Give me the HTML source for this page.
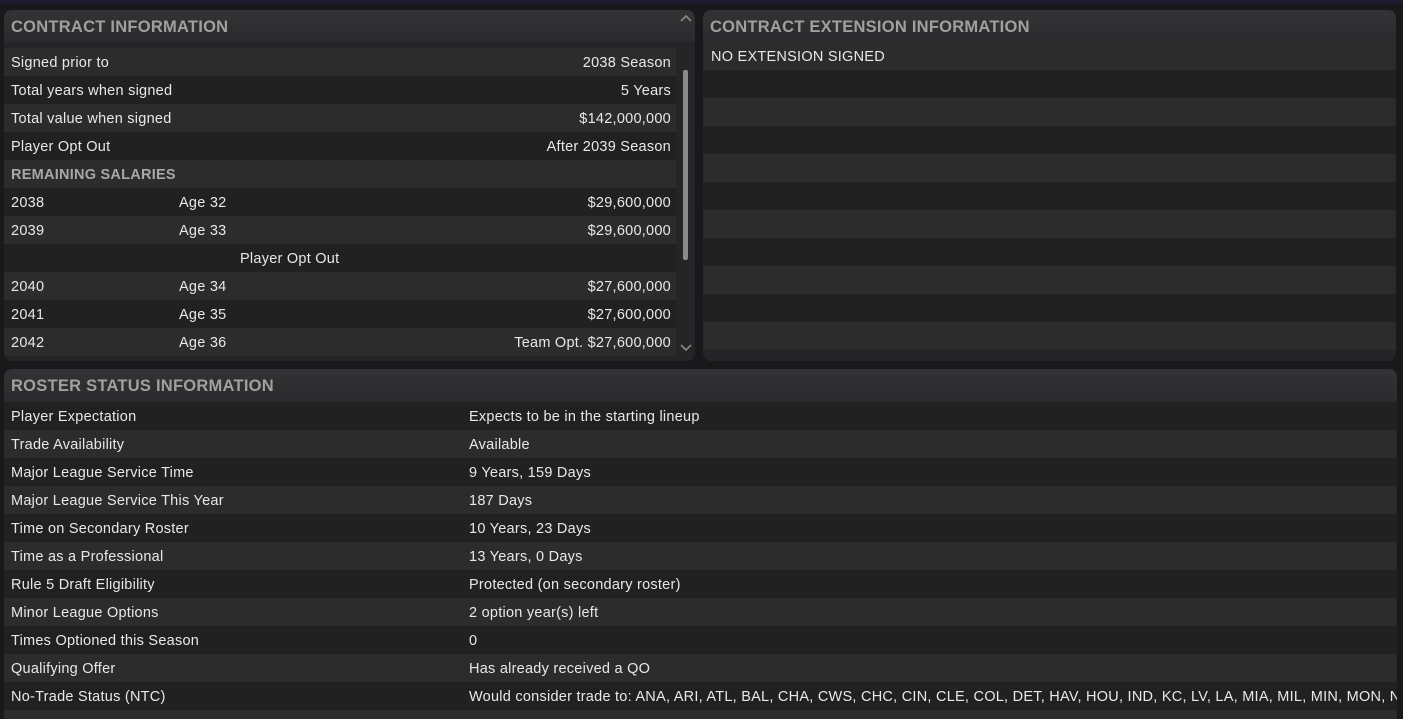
<!DOCTYPE html><html><head><style>
*{margin:0;padding:0;box-sizing:border-box}
html,body{width:1403px;height:719px;overflow:hidden}
body{background:#19191b;font-family:"Liberation Sans",sans-serif;font-size:14.5px;letter-spacing:.25px;color:#e8e8e8;position:relative}
.top{position:absolute;left:0;top:0;width:1403px;height:4px;background:#1c1c2e}
.panel{position:absolute;background:#252527;border-radius:8px;overflow:hidden}
.hd{height:32px;line-height:34px;padding-left:7px;font-weight:bold;font-size:16.5px;color:#a0a0a0;background:linear-gradient(#333335,#2b2b2d);}
.row{height:28px;line-height:30px;padding-left:7px;position:relative;white-space:nowrap}
.a{background:#2c2c2c}.b{background:#212121}
.r{position:absolute;right:5px;top:0}
.g{color:#a8a8a8;font-weight:bold}
</style></head><body>
<div class="top"></div>
<div class="panel" style="left:4px;top:10px;width:691px;height:351px">
<div class="hd">CONTRACT INFORMATION</div>
<div style="position:absolute;left:0;top:38px;width:672px">
<div class="row a">Signed prior to<span class="r">2038 Season</span></div>
<div class="row b">Total years when signed<span class="r">5 Years</span></div>
<div class="row a">Total value when signed<span class="r">$142,000,000</span></div>
<div class="row b">Player Opt Out<span class="r">After 2039 Season</span></div>
<div class="row a g">REMAINING SALARIES</div>
<div class="row b">2038<span style="position:absolute;left:175px">Age 32</span><span class="r">$29,600,000</span></div>
<div class="row a">2039<span style="position:absolute;left:175px">Age 33</span><span class="r">$29,600,000</span></div>
<div class="row b"><span style="position:absolute;left:236px">Player Opt Out</span></div>
<div class="row a">2040<span style="position:absolute;left:175px">Age 34</span><span class="r">$27,600,000</span></div>
<div class="row b">2041<span style="position:absolute;left:175px">Age 35</span><span class="r">$27,600,000</span></div>
<div class="row a">2042<span style="position:absolute;left:175px">Age 36</span><span class="r">Team Opt. $27,600,000</span></div>
</div>
<div style="position:absolute;left:679px;top:60px;width:5px;height:190px;background:#8a8a8a;border-radius:2px"></div>
<svg style="position:absolute;left:675px;top:3px" width="14" height="10"><path d="M2 8 L7 3 L12 8" stroke="#888" stroke-width="1.6" fill="none"/></svg>
<svg style="position:absolute;left:675px;top:333px" width="14" height="10"><path d="M2 2 L7 7 L12 2" stroke="#888" stroke-width="1.6" fill="none"/></svg>
</div>
<div class="panel" style="left:703px;top:10px;width:693px;height:351px">
<div class="hd">CONTRACT EXTENSION INFORMATION</div>
<div style="position:absolute;left:0;top:32px;width:693px">
<div class="row a" style="padding-left:8px">NO EXTENSION SIGNED</div>
<div class="row b"></div><div class="row a"></div><div class="row b"></div><div class="row a"></div><div class="row b"></div><div class="row a"></div><div class="row b"></div><div class="row a"></div><div class="row b"></div><div class="row a"></div>
</div></div>
<div class="panel" style="left:4px;top:369px;width:1393px;height:360px;border-radius:8px 8px 0 0">
<div class="hd" style="height:33px;line-height:35px">ROSTER STATUS INFORMATION</div>
<div style="position:absolute;left:0;top:33px;width:1393px">
<div class="row b">Player Expectation<span style="position:absolute;left:465px">Expects to be in the starting lineup</span></div>
<div class="row a">Trade Availability<span style="position:absolute;left:465px">Available</span></div>
<div class="row b">Major League Service Time<span style="position:absolute;left:465px">9 Years, 159 Days</span></div>
<div class="row a">Major League Service This Year<span style="position:absolute;left:465px">187 Days</span></div>
<div class="row b">Time on Secondary Roster<span style="position:absolute;left:465px">10 Years, 23 Days</span></div>
<div class="row a">Time as a Professional<span style="position:absolute;left:465px">13 Years, 0 Days</span></div>
<div class="row b">Rule 5 Draft Eligibility<span style="position:absolute;left:465px">Protected (on secondary roster)</span></div>
<div class="row a">Minor League Options<span style="position:absolute;left:465px">2 option year(s) left</span></div>
<div class="row b">Times Optioned this Season<span style="position:absolute;left:465px">0</span></div>
<div class="row a">Qualifying Offer<span style="position:absolute;left:465px">Has already received a QO</span></div>
<div class="row b" style="overflow:hidden">No-Trade Status (NTC)<span style="position:absolute;left:465px">Would consider trade to: ANA, ARI, ATL, BAL, CHA, CWS, CHC, CIN, CLE, COL, DET, HAV, HOU, IND, KC, LV, LA, MIA, MIL, MIN, MON, NYY, NYM</span></div>
<div class="row a"></div>
</div></div>
</body></html>
